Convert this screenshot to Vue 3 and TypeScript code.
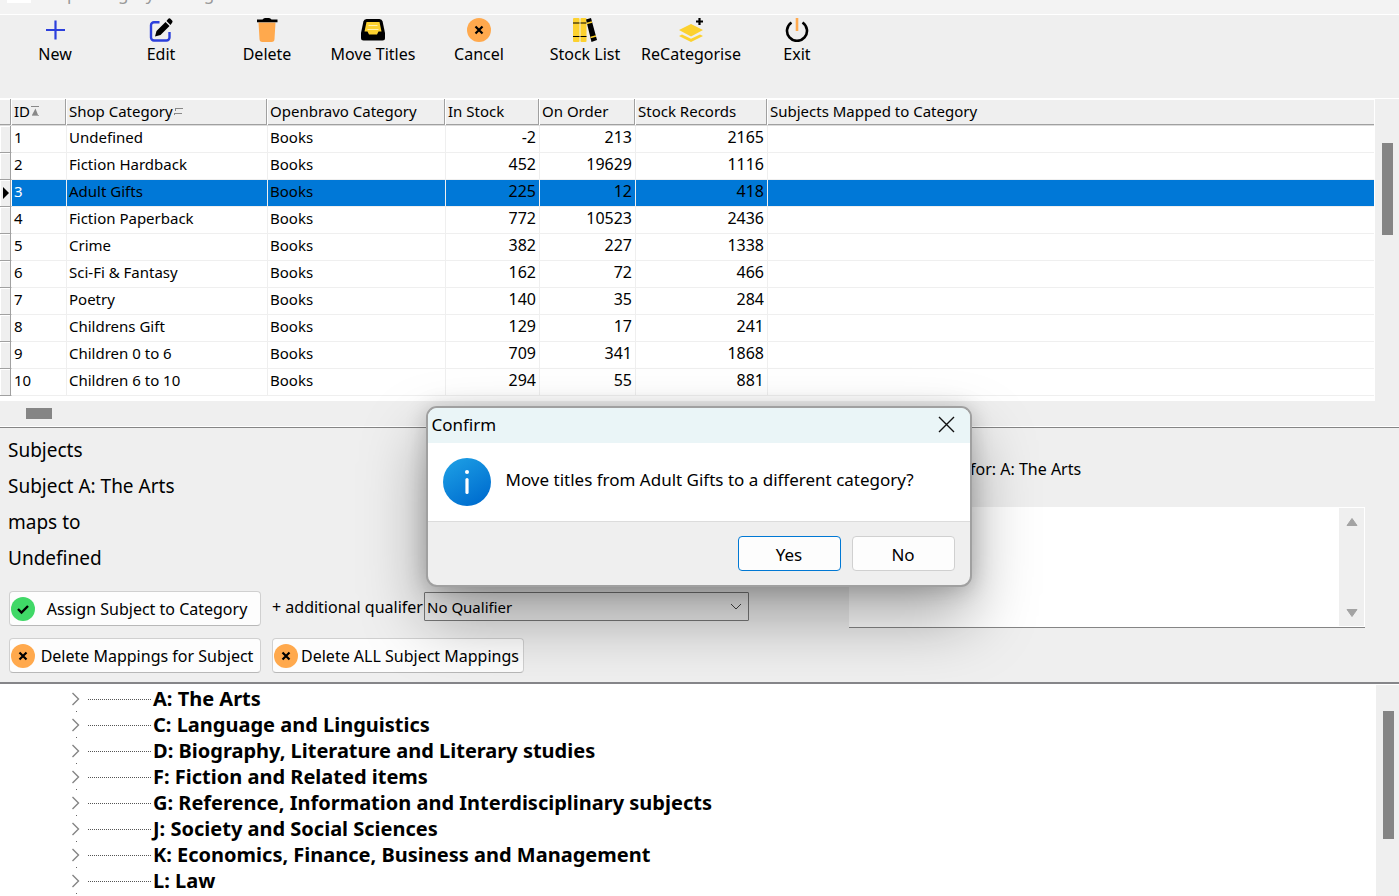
<script setup lang="ts">
import { ref } from 'vue'

interface Category {
  id: number
  name: string
  pos: string
  stock: number
  order: number
  records: number
}

const actions = ['New', 'Edit', 'Delete', 'Move Titles', 'Cancel', 'Stock List', 'ReCategorise', 'Exit']

const categories: Category[] = [
  { id: 1, name: 'Undefined', pos: 'Books', stock: -2, order: 213, records: 2165 },
  { id: 2, name: 'Fiction Hardback', pos: 'Books', stock: 452, order: 19629, records: 1116 },
  { id: 3, name: 'Adult Gifts', pos: 'Books', stock: 225, order: 12, records: 418 },
  { id: 4, name: 'Fiction Paperback', pos: 'Books', stock: 772, order: 10523, records: 2436 },
  { id: 5, name: 'Crime', pos: 'Books', stock: 382, order: 227, records: 1338 },
  { id: 6, name: 'Sci-Fi & Fantasy', pos: 'Books', stock: 162, order: 72, records: 466 },
  { id: 7, name: 'Poetry', pos: 'Books', stock: 140, order: 35, records: 284 },
  { id: 8, name: 'Childrens Gift', pos: 'Books', stock: 129, order: 17, records: 241 },
  { id: 9, name: 'Children 0 to 6', pos: 'Books', stock: 709, order: 341, records: 1868 },
  { id: 10, name: 'Children 6 to 10', pos: 'Books', stock: 294, order: 55, records: 881 },
]

const subjects = [
  'A: The Arts',
  'C: Language and Linguistics',
  'D: Biography, Literature and Literary studies',
  'F: Fiction and Related items',
  'G: Reference, Information and Interdisciplinary subjects',
  'J: Society and Social Sciences',
  'K: Economics, Finance, Business and Management',
  'L: Law',
]

const selectedId = ref(3)
const qualifier = ref('No Qualifier')
const notes = ref('')
</script>

<template>
  <div class="window">
    <header class="titlebar">
      <span class="app-icon"></span>
      <span class="app-title">Shop Category Management</span>
    </header>

    <nav class="toolbar">
      <button v-for="action in actions" :key="action" type="button" class="tool">
        <svg viewBox="0 0 24 24" width="24" height="24" aria-hidden="true">
          <path v-if="action === 'New'" d="M12.500 2.500v19M3 12h19" fill="none" stroke="#2c3fdc" stroke-width="2.200" />
          <g v-else-if="action === 'Edit'">
            <path d="M10.500 4.200H5a3 3 0 0 0-3 3V19.500a3 3 0 0 0 3 3H17.500a3 3 0 0 0 3-3V14" fill="none" stroke="#2c3fdc" stroke-width="2.400" />
            <path d="M6 18.500l1.500-5.500L16.500 4l4 4-9 9zM17.500 3l1.400-1.800a2 2 0 0 1 3 0l1.200 1.200a2 2 0 0 1 0 2.400L21.500 7z" fill="#000" />
          </g>
          <g v-else-if="action === 'Delete'">
            <path d="M3.500 4.500h17L19.500 21a3 3 0 0 1-3 3h-9a3 3 0 0 1-3-3z" fill="#ffa94d" />
            <path d="M2 1.500h5.500Q8.500 0 10 0h4q1.500 0 2.500 1.500H22.500V4.300H2z" fill="#000" />
          </g>
          <g v-else-if="action === 'Move Titles'">
            <path d="M5.500 1h13Q21 1 21.600 3.500L24 15v5q0 2.500-2.500 2.500h-19Q0 22.500 0 20v-5L2.400 3.500Q3 1 5.500 1z" fill="#000" />
            <path d="M5.500 4h13l2 9.500h-3L16 16.500H8L6.500 13.500h-3z" fill="#fcd12f" />
            <path d="M7.500 7.500h9M6.500 11.500h11" stroke="#fff1b0" stroke-width="1" />
          </g>
          <g v-else-if="action === 'Cancel'">
            <circle cx="12" cy="12" r="12" fill="#ffa94d" />
            <path d="M8.500 8.500l7 7M15.500 8.500l-7 7" stroke="#000" stroke-width="2.200" />
          </g>
          <g v-else-if="action === 'Stock List'">
            <rect x="0" y="0" width="6.500" height="24" rx="1" fill="#fcd12f" />
            <rect x="7.500" y="0" width="6" height="24" rx="1" fill="#fcd12f" />
            <path d="M0 5h6.500M7.500 5h6M0 18.500h6.500M7.500 18.500h6" stroke="#000" stroke-width="1.200" />
            <path d="M13 1.500L18 0l6 22-5.500 2z" fill="#000" />
            <path d="M13.500 5.500l5.500-1.500M17.500 19.500l5.500-1.500" stroke="#fcd12f" stroke-width="1.300" />
          </g>
          <g v-else-if="action === 'ReCategorise'">
            <path d="M12 6L24 12 12 18.500 0 12zM0 18l3-1.500 9 4.200 9-4.200 3 1.500-12 6z" fill="#fcd12f" />
            <path d="M20.500 0v7M17 3.500h7" stroke="#000" stroke-width="2.200" />
          </g>
          <g v-else>
            <path d="M6.500 4.500a10 10 0 1 0 11 0" fill="none" stroke="#000" stroke-width="2.600" />
            <path d="M12 0v13" stroke="#ffa94d" stroke-width="2.600" />
          </g>
        </svg>
        <span>{{ action }}</span>
      </button>
    </nav>

    <section class="grid-area">
      <div class="grid-body">
        <table class="grid">
          <colgroup>
            <col class="c-mark" /><col class="c-id" /><col class="c-shop" /><col class="c-pos" />
            <col class="c-stock" /><col class="c-order" /><col class="c-records" /><col />
          </colgroup>
          <thead>
            <tr>
              <th></th>
              <th>ID<svg class="sort" width="9" height="12" viewBox="0 0 9 12" aria-hidden="true"><path d="M0 1.500h8" stroke="#888" /><path d="M4.500 3.500L7 10H1z" fill="#888" /><path d="M1 10.500h7" stroke="#aaa" /></svg></th>
              <th>Shop Category<svg class="sort" width="9" height="12" viewBox="0 0 9 12" aria-hidden="true"><path d="M1 3.500h8M1.500 3v3M0 8.500h8M.5 8v2" fill="none" stroke="#888" /></svg></th>
              <th>Openbravo Category</th>
              <th>In Stock</th>
              <th>On Order</th>
              <th>Stock Records</th>
              <th>Subjects Mapped to Category</th>
            </tr>
          </thead>
          <tbody>
            <tr v-for="row in categories" :key="row.id" :class="{ selected: row.id === selectedId }" @click="selectedId = row.id">
              <td class="mark">
                <svg v-if="row.id === selectedId" width="6" height="12" viewBox="0 0 6 12" aria-hidden="true"><path d="M0 0l6 6-6 6z" /></svg>
              </td>
              <td class="id">{{ row.id }}</td>
              <td>{{ row.name }}</td>
              <td>{{ row.pos }}</td>
              <td class="num">{{ row.stock }}</td>
              <td class="num">{{ row.order }}</td>
              <td class="num">{{ row.records }}</td>
              <td class="last"></td>
            </tr>
          </tbody>
        </table>
        <div class="v-track grid-track"><div class="v-thumb"></div></div>
      </div>
      <div class="h-track"><div class="h-thumb"></div></div>
    </section>

    <section class="mapping">
      <div class="mapping-left">
        <p>Subjects</p>
        <p>Subject A: The Arts</p>
        <p>maps to</p>
        <p>Undefined</p>
        <div class="actions">
          <button type="button" class="action">
            <svg width="24" height="24" viewBox="0 0 24 24" aria-hidden="true">
              <circle cx="12" cy="12" r="12" fill="#40d867" />
              <path d="M7 12l3.500 3.500L17 9" fill="none" stroke="#000" stroke-width="2.400" />
            </svg>
            <span>Assign Subject to Category</span>
          </button>
          <div class="qualifier">
            <label for="qualifier">+ additional qualifer</label>
            <div class="combo">
              <select id="qualifier" v-model="qualifier"><option>No Qualifier</option></select>
              <svg width="12" height="8" viewBox="0 0 12 8" aria-hidden="true"><path d="M1 1l5 5 5-5" fill="none" stroke="#444" /></svg>
            </div>
          </div>
          <button v-for="label in ['Delete Mappings for Subject', 'Delete ALL Subject Mappings']" :key="label" type="button" class="action">
            <svg width="24" height="24" viewBox="0 0 24 24" aria-hidden="true">
              <circle cx="12" cy="12" r="12" fill="#ffa94d" />
              <path d="M8.500 8.500l7 7M15.500 8.500l-7 7" stroke="#000" stroke-width="2.200" />
            </svg>
            <span>{{ label }}</span>
          </button>
        </div>
      </div>
      <div class="mapping-right">
        <label for="notes">for: A: The Arts</label>
        <div class="memo">
          <textarea id="notes" v-model="notes"></textarea>
          <div class="memo-track">
            <svg width="12" height="10" viewBox="0 0 12 10" aria-hidden="true"><path d="M6 1.500L11 8.500H1z" fill="#a3a3a3" stroke="#a3a3a3" stroke-linejoin="round" /></svg>
            <svg width="12" height="10" viewBox="0 0 12 10" aria-hidden="true"><path d="M6 8.500L1 1.500h10z" fill="#a3a3a3" stroke="#a3a3a3" stroke-linejoin="round" /></svg>
          </div>
        </div>
      </div>
    </section>

    <section class="tree-area">
      <ul class="tree">
        <li v-for="subject in subjects" :key="subject">
          <svg width="10" height="26" viewBox="0 0 10 26" aria-hidden="true">
            <path d="M1.500 7l6 6-6 6" fill="none" stroke="#858585" stroke-width="1.400" />
            <path d="M5 25.500h1" stroke="#666" />
          </svg>
          <svg width="64" height="26" viewBox="0 0 64 26" aria-hidden="true">
            <path d="M0 13.500h63" stroke="#555" stroke-dasharray="1 1" />
          </svg>
          <span>{{ subject }}</span>
        </li>
      </ul>
      <div class="v-track tree-track"><div class="v-thumb"></div></div>
    </section>

    <div class="dialog" role="dialog" aria-labelledby="dialog-title">
      <div class="dialog-head">
        <span id="dialog-title">Confirm</span>
        <button type="button" class="close" aria-label="Close">
          <svg width="17" height="17" viewBox="0 0 17 17" aria-hidden="true"><path d="M1 1l15 15M16 1L1 16" stroke="#111" stroke-width="1.400" /></svg>
        </button>
      </div>
      <div class="dialog-body">
        <svg width="48" height="48" viewBox="0 0 48 48" aria-hidden="true">
          <defs>
            <linearGradient id="info" x1="0" y1="0" x2="0.600" y2="1">
              <stop offset="0" stop-color="#1fa2e6" />
              <stop offset="1" stop-color="#006fd0" />
            </linearGradient>
          </defs>
          <circle cx="24" cy="24" r="24" fill="url(#info)" />
          <circle cx="24" cy="14" r="2" fill="#fff" />
          <path d="M24 21.500v13" stroke="#fff" stroke-width="3.200" stroke-linecap="round" />
        </svg>
        <span class="message">Move titles from Adult Gifts to a different category?</span>
      </div>
      <div class="dialog-foot">
        <button type="button" class="choice primary">Yes</button>
        <button type="button" class="choice">No</button>
      </div>
    </div>
  </div>
</template>

<style>
body {
  margin: 0;
  background: #efefef;
}
</style>

<style scoped>
.window {
  position: relative;
  display: flex;
  flex-direction: column;
  height: 100vh;
  overflow: hidden;
  background: #efefef;
  color: #000;
  font: 16px/20px Tahoma, "Noto Sans", sans-serif;
}
button,
select,
textarea {
  font: inherit;
  color: inherit;
}
.titlebar {
  display: flex;
  align-items: flex-end;
  height: 3px;
  padding: 0 7px 11px;
  background: #f3f3f3;
  border-bottom: 1px solid #fff;
  color: #999;
  overflow: hidden;
}
.app-icon {
  width: 24px;
  height: 24px;
  margin-right: 6px;
  background: #fff;
}
.app-title {
  font-size: 17px;
  line-height: 18px;
}
.toolbar {
  display: flex;
  height: 83px;
  padding-left: 2px;
}
.tool {
  display: flex;
  flex-direction: column;
  align-items: center;
  gap: 2px;
  width: 106px;
  padding: 3px 0 0;
  border: 0;
  background: none;
  white-space: nowrap;
}
.grid-area {
  background: #fff;
  border-top: 1px solid #fff;
  border-bottom: 1px solid #858585;
}
.grid-body {
  display: flex;
  height: 302px;
}
.grid {
  flex: 1;
  width: 100%;
  align-self: flex-start;
  table-layout: fixed;
  border-collapse: separate;
  border-spacing: 0;
  font-size: 15px;
}
.c-mark { width: 12px; }
.c-id { width: 55px; }
.c-shop { width: 201px; }
.c-pos { width: 178px; }
.c-stock { width: 94px; }
.c-order { width: 96px; }
.c-records { width: 132px; }
.grid th {
  box-sizing: border-box;
  height: 27px;
  padding: 0 0 3px 2px;
  border-bottom: 1px solid #dcdcdc;
  background: #efefef;
  box-shadow: inset -1px 0 #fff, inset 0 -1px #a0a0a0, inset -2px 0 #a0a0a0, inset 0 1px #fff;
  font-weight: 400;
  text-align: left;
  white-space: nowrap;
}
.grid th:last-child {
  box-shadow: inset 0 -1px #a0a0a0, inset 0 1px #fff;
}
.sort {
  margin-left: 1px;
}
.grid td {
  box-sizing: border-box;
  height: 27px;
  padding: 0 2px 4px;
  border-right: 1px solid #efefef;
  border-bottom: 1px solid #efefef;
  line-height: 20px;
}
.grid td.last {
  border-right: 0;
}
.grid .num {
  padding-right: 3px;
  font-size: 16px;
  text-align: right;
}
.grid td.mark {
  padding: 0 0 0 3px;
  border-right: 1px solid #fff;
  border-bottom-color: #a0a0a0;
  background: #efefef;
  box-shadow: inset -1px 0 #a0a0a0, inset 0 1px #fff, inset 1px 0 #fff;
}
.mark svg {
  display: block;
}
.selected td:not(.mark) {
  background: #0078d7;
}
.selected .id {
  color: #fff;
}
.v-track {
  box-sizing: border-box;
  background: #efefef;
}
.v-thumb {
  width: 11px;
  background: #858585;
}
.grid-track {
  width: 24px;
  margin-left: 1px;
  padding: 44px 0 0 7px;
}
.grid-track .v-thumb {
  height: 92px;
}
.h-track {
  height: 11px;
  padding: 7px 26px;
  background: #efefef;
  border-bottom: 1px solid #fff;
}
.h-thumb {
  width: 26px;
  height: 11px;
  background: #858585;
}
.mapping {
  display: flex;
  height: 254px;
  border-bottom: 2px solid #858589;
}
.mapping-left {
  box-sizing: border-box;
  width: 849px;
  padding: 4px 0 0 8px;
}
.mapping-left p {
  margin: 0;
  font-size: 19px;
  line-height: 36px;
}
.actions {
  display: grid;
  grid-template-columns: 252px 477px;
  column-gap: 11px;
  row-gap: 12px;
  padding: 15px 0 0 1px;
}
.action {
  display: flex;
  align-items: center;
  box-sizing: border-box;
  width: 252px;
  height: 35px;
  padding: 0 1px;
  border: 1px solid #d0d0d0;
  border-bottom-color: #b8b8b8;
  border-radius: 4px;
  background: #fdfdfd;
  white-space: nowrap;
}
.action svg {
  flex: none;
}
.action span {
  flex: 1;
  text-align: center;
}
.qualifier {
  display: flex;
  align-items: flex-start;
  white-space: nowrap;
}
.qualifier label {
  width: 152px;
  line-height: 32px;
}
.combo {
  position: relative;
  flex: 1;
  margin-top: 1px;
}
.combo select {
  appearance: none;
  width: 100%;
  height: 29px;
  padding: 0 2px;
  border: 1px solid #7a7a7a;
  border-radius: 1px;
  background: #efefef;
  font-size: 15px;
}
.combo svg {
  position: absolute;
  top: 11px;
  right: 7px;
}
.mapping-right {
  flex: 1;
  padding: 31px 34px 0 0;
}
.mapping-right label {
  display: block;
  padding-left: 121px;
}
.memo {
  display: flex;
  box-sizing: border-box;
  height: 121px;
  margin-top: 28px;
  border-bottom: 1px solid #858585;
  background: #fff;
}
.memo textarea {
  flex: 1;
  border: 0;
  padding: 2px;
  background: #fff;
  resize: none;
  outline: 0;
}
.memo-track {
  display: flex;
  flex-direction: column;
  align-items: center;
  justify-content: space-between;
  width: 25px;
  margin: 1px;
  padding: 9px 0 8px;
  box-sizing: border-box;
  background: #efefef;
}
.tree-area {
  display: flex;
  flex: 1;
  min-height: 0;
  padding-top: 1px;
  background: #fff;
}
.tree {
  flex: 1;
  margin: 0;
  padding: 1px 0 0 71px;
  list-style: none;
  overflow: hidden;
  font-size: 20px;
  font-weight: 700;
}
.tree li {
  display: flex;
  height: 26px;
  line-height: 26px;
  white-space: nowrap;
}
.tree svg + svg {
  margin: 0 1px 0 7px;
}
.tree-track {
  width: 23px;
  padding: 26px 0 0 7px;
}
.tree-track .v-thumb {
  height: 128px;
}
.dialog {
  position: absolute;
  top: 406px;
  left: calc(50% - 274px);
  box-sizing: border-box;
  width: 546px;
  border: 2px solid #a0a0a0;
  border-radius: 11px;
  background: #efefef;
  box-shadow: 0 32px 64px rgba(0, 0, 0, 0.34), 0 2px 21px rgba(0, 0, 0, 0.2);
  font-family: "Segoe UI", "Noto Sans", sans-serif;
  font-size: 17px;
}
.dialog-head {
  display: flex;
  align-items: center;
  justify-content: space-between;
  box-sizing: border-box;
  height: 35px;
  padding: 0 15px 2px 4px;
  border-radius: 9px 9px 0 0;
  background: #eaf5f7;
}
.close {
  display: flex;
  padding: 0;
  border: 0;
  background: none;
}
.dialog-body {
  display: flex;
  align-items: center;
  gap: 15px;
  height: 78px;
  padding: 0 15px;
  border-bottom: 1px solid #dcdcdc;
  background: #fff;
}
.message {
  padding-bottom: 4px;
}
.dialog-foot {
  display: flex;
  justify-content: flex-end;
  gap: 11px;
  padding: 14px 15px;
}
.choice {
  width: 103px;
  height: 35px;
  padding: 2px 0 0;
  border: 1px solid #d0d0d0;
  border-radius: 4px;
  background: #fdfdfd;
}
.choice.primary {
  border-color: #0078d4;
}
</style>
